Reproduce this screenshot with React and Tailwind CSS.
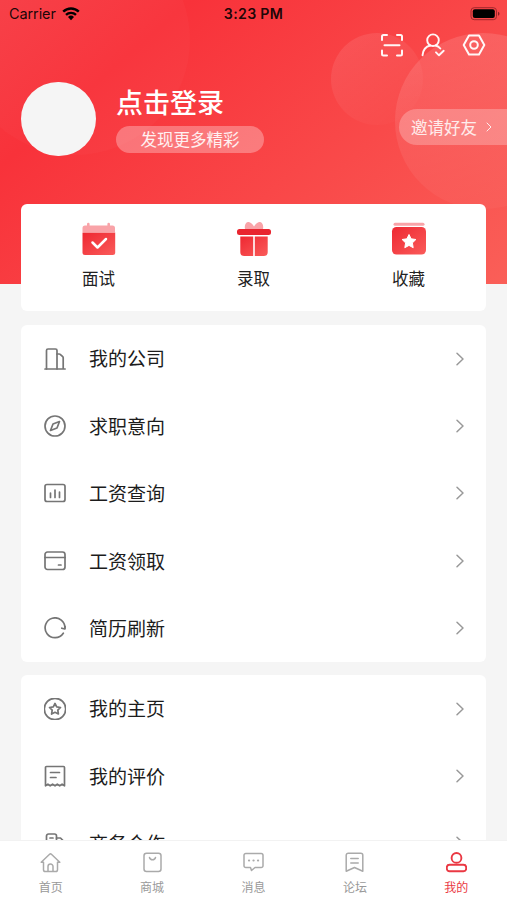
import clsx from 'clsx';

/* 线性图标的公共属性 */
const line = {
    fill: 'none',
    stroke: 'currentColor',
    strokeLinecap: 'round',
    strokeLinejoin: 'round',
};

/* 菜单图标 */
const MENU_ICONS = {
    company: (
        <>
            <path d="M2.500 21V2.500a1.500 1.500 0 0 1 1.500-1.500h7.500a1.500 1.500 0 0 1 1.500 1.500V21" />
            <path d="M13 6h2.200a1.500 1.500 0 0 1 1 .4l2.500 2.300a1.500 1.500 0 0 1 .5 1.100V21M1 21h20.200" />
        </>
    ),
    compass: (
        <>
            <circle cx="11" cy="11" r="10" />
            <path d="M15.500 6.500l-6.500 2.500-2.500 6.500 6.500-2.500z" />
        </>
    ),
    chart: (
        <>
            <rect x="1" y="2.500" width="20" height="17" rx="2" />
            <path d="M6.500 11v4.500M11 8v7.500M15.500 10v5.500" />
        </>
    ),
    wallet: (
        <>
            <rect x="1" y="2" width="20" height="17.500" rx="2.500" />
            <path d="M1 7.500h20M14.500 15h2.500" />
        </>
    ),
    refresh: (
        <>
            <path d="M19.300 16.200A9.900 9.900 0 1 1 20.900 11.500" />
            <path d="M17.800 11.200l3 .8.300-2.500" />
        </>
    ),
    star: (
        <>
            <circle cx="11" cy="11" r="10.700" />
            <path d="M11 5.500l1.700 3.400 3.800.6-2.700 2.700.6 3.800-3.400-1.700L7.600 16l.6-3.800-2.700-2.700 3.800-.6z" />
        </>
    ),
    review: (
        <>
            <path d="M1.500 20.800V2.500a1 1 0 0 1 1-1h17a1 1 0 0 1 1 1v18.300l-2.400-1.600-2.400 1.600-2.400-1.600-2.300 1.600-2.400-1.600-2.400 1.600-2.300-1.600z" />
            <path d="M6.500 7.500h9M6.500 12.500h5.500" />
        </>
    ),
    business: (
        <>
            <path d="M2.500 21V4a2 2 0 0 1 2-2h6a2 2 0 0 1 2 2V21" />
            <path d="M6 6h3M12.500 6h4l2.500 2.500V21M1 21h20" />
        </>
    ),
};

/* 第一组菜单 */
const JOB_MENUS = [
    { label: '我的公司', icon: 'company' },
    { label: '求职意向', icon: 'compass' },
    { label: '工资查询', icon: 'chart' },
    { label: '工资领取', icon: 'wallet' },
    { label: '简历刷新', icon: 'refresh' },
];

/* 第二组菜单 */
const PERSONAL_MENUS = [
    { label: '我的主页', icon: 'star' },
    { label: '我的评价', icon: 'review' },
    { label: '商务合作', icon: 'business' },
];

/* 快捷入口 */
const SHORTCUTS = [
    {
        label: '面试',
        icon: (
            <>
                <path d="M1.500 10V6A2.500 2.500 0 0 1 4 3.500h2V2a1.300 1.300 0 0 1 2.600 0v1.500h17.800V2A1.300 1.300 0 0 1 29 2v1.500h2.500A2.500 2.500 0 0 1 34 6v4z" fill="#f9a3a8" />
                <path d="M1.500 10.500H34.200v20a2.500 2.500 0 0 1-2.500 2.500H4a2.500 2.500 0 0 1-2.500-2.500z" fill="url(#red)" />
                <path d="M11.500 20.500l5 5 8.500-8.500" {...line} stroke="#fff" strokeWidth="2.500" />
            </>
        ),
    },
    {
        label: '录取',
        icon: (
            <>
                <path d="M9 7C8 2.500 10.500-.8 13.500.3c2 .7 3.500 2.500 4.500 4.200 1-1.700 2.500-3.500 4.500-4.200C25.500-.8 28 2.500 27 7z" fill="#f9a3a8" />
                <rect x="1" y="7" width="34" height="6" rx="2.500" fill="#e9252f" />
                <path d="M4.300 14.500h12.900V34H8a3.700 3.700 0 0 1-3.700-3.700zM18.800 14.500h12.900v15.800A3.700 3.700 0 0 1 28 34h-9.200z" fill="url(#red)" />
            </>
        ),
    },
    {
        label: '收藏',
        icon: (
            <>
                <rect x="2.500" y=".8" width="31" height="3" rx="1.500" fill="#f9a3a8" />
                <rect x="1" y="5" width="34" height="27.500" rx="4.500" fill="url(#red)" />
                <path d="M18 12.500l2.100 4.300 4.800.7-3.500 3.400.8 4.800-4.200-2.300-4.200 2.300.8-4.800-3.500-3.400 4.800-.7z" fill="#fff" stroke="#fff" strokeWidth="1" strokeLinejoin="round" />
            </>
        ),
    },
];

/* 底部导航 */
const TABS = [
    { label: '首页', icon: <path d="M1.200 10.200L9.600 2.300a1.300 1.300 0 0 1 1.800 0l8.400 7.900h-2.300v7.500a1.800 1.800 0 0 1-1.800 1.800H5.300a1.800 1.800 0 0 1-1.800-1.800v-7.500zM8 19.500v-5a2.500 2.500 0 0 1 5 0v5" /> },
    {
        label: '商城',
        icon: (
            <>
                <rect x="2" y="1.200" width="17" height="18.300" rx="2.500" />
                <path d="M7.500 5.500c.8 3 5.200 3 6 0" />
            </>
        ),
    },
    {
        label: '消息',
        icon: (
            <>
                <path d="M2.800 1.500h15.400A1.800 1.800 0 0 1 20 3.300v10.400a1.800 1.800 0 0 1-1.800 1.800H12l-3.500 3-1-3H2.800A1.800 1.800 0 0 1 1 13.700V3.300a1.800 1.800 0 0 1 1.800-1.800z" />
                <path d="M6 8.500h.1M10.500 8.500h.1M15 8.500h.1" strokeWidth="2.200" />
            </>
        ),
    },
    {
        label: '论坛',
        icon: (
            <>
                <path d="M2.200 19.300V3.200a2 2 0 0 1 2-2h12.600a2 2 0 0 1 2 2v16.100l-8.300-3.800z" />
                <path d="M6.800 6.500h7.400M6.800 11h7.400" />
            </>
        ),
    },
    {
        label: '我的',
        active: true,
        icon: (
            <>
                <circle cx="10.500" cy="5.900" r="4.900" />
                <rect x=".8" y="12.800" width="19.400" height="6.500" rx="2.800" />
            </>
        ),
    },
];

/* 状态栏 */
const StatusBar = () => (
    <div className="relative flex h-7 items-center justify-between pl-[9px] pr-[6px] font-['Inter',sans-serif] text-black/90">
        <div className="flex items-center gap-[6px]">
            <span className="text-[14.500px] tracking-[-0.1px]">Carrier</span>
            <svg className="h-[14px] w-[18px]" viewBox="0 0 18 14">
                <path d="M1.200 4.700a11.200 11.200 0 0 1 15.600 0M4 7.900a7.200 7.200 0 0 1 10 0" fill="none" stroke="#000" strokeWidth="2.400" />
                <path d="M9 13.200l-3-3.200a4.300 4.300 0 0 1 6 0z" />
            </svg>
        </div>
        <span className="absolute left-1/2 -translate-x-1/2 whitespace-nowrap text-[14.200px] font-semibold tracking-[0.300px]">3:23 PM</span>
        <svg className="h-[14px] w-[31px]" viewBox="0 0 31 14">
            <rect x="1" y=".7" width="25.500" height="12" rx="3.200" fill="none" stroke="#a0282d" />
            <rect x="2.800" y="2.300" width="22" height="8.800" rx="2" />
            <path d="M28 4.700v4c2-.8 2-3.200 0-4z" fill="#8a2024" />
        </svg>
    </div>
);

/* 菜单行 */
const MenuRow = ({ label, icon }) => (
    <div className="flex h-[67.400px] shrink-0 items-center pl-[23px] pr-[21px]">
        <svg className="h-[22px] w-[22px] text-[#757575]" viewBox="0 0 22 22" {...line} strokeWidth="1.700">
            {MENU_ICONS[icon]}
        </svg>
        <span className="ml-[23px] flex-1 text-[19px] text-[#1c1c1c]">{label}</span>
        <svg className="h-[14px] w-[10px] text-[#999]" viewBox="0 0 10 14" {...line} strokeWidth="1.500">
            <path d="M2 1.200L8 7l-6 5.800" />
        </svg>
    </div>
);

const App = () => {
    return (
        <div className="flex h-[900px] w-[507px] flex-col overflow-hidden bg-[#f5f5f5] font-['Noto_Sans_CJK_SC',sans-serif]">
            {/* 顶部用户信息 */}
            <header className="relative h-[284px] shrink-0 overflow-hidden bg-linear-[139deg] from-[#f73c44] via-[#f8323a] via-23% to-[#fa5f58]">
                <svg className="absolute inset-0 h-[284px] w-[507px]" viewBox="0 0 507 284">
                    <defs>
                        <linearGradient id="bubble" x1="0" y1="0" x2="0.700" y2="1">
                            <stop offset="0" stopColor="#fff" stopOpacity=".11" />
                            <stop offset="1" stopColor="#fff" stopOpacity=".01" />
                        </linearGradient>
                        <linearGradient id="bigBubble" x1="0.300" y1="0" x2="0.500" y2="1">
                            <stop offset="0" stopColor="#fff" stopOpacity=".13" />
                            <stop offset="1" stopColor="#fff" stopOpacity=".03" />
                        </linearGradient>
                    </defs>
                    <circle cx="75" cy="40" r="115" fill="#fff" fillOpacity=".025" />
                    <circle cx="377" cy="79" r="46" fill="url(#bubble)" />
                    <circle cx="483" cy="121" r="88" fill="url(#bigBubble)" />
                </svg>
                <StatusBar />
                {/* 右上角操作 */}
                <div className="relative flex h-[34px] items-center justify-end gap-[17px] pr-[21.500px] text-white/95">
                    <svg className="h-6 w-6" viewBox="0 0 24 24" {...line} strokeWidth="2">
                        <path d="M2 7V3.500A1.500 1.500 0 0 1 3.500 2H7M17 2h3.500A1.500 1.500 0 0 1 22 3.500V7M22 17.500V21a1.500 1.500 0 0 1-1.500 1.500H17M7 22.500H3.500A1.500 1.500 0 0 1 2 21v-3.500M4.500 12.300h15" />
                    </svg>
                    <svg className="h-6 w-6" viewBox="0 0 24 24" {...line} strokeWidth="1.900">
                        <circle cx="12" cy="7.200" r="5.800" />
                        <path d="M1.500 22.300c.5-5.300 3.300-8.800 7.800-9.800M14.700 12.500c1.800.5 3.400 1.500 4.600 3M15 19.300l3 3 4.700-4.500" />
                    </svg>
                    <svg className="h-6 w-6" viewBox="0 0 24 24" {...line} strokeWidth="2">
                        <path d="M7 2.500h10L22.300 12 17 21.500H7L1.700 12z" />
                        <circle cx="12" cy="12" r="3.800" />
                    </svg>
                </div>
                {/* 头像与登录 */}
                <div className="relative flex items-start pl-[21px] pt-5">
                    <div className="h-[74px] w-[75px] rounded-full bg-[#f5f5f5]" />
                    <div className="ml-5 mt-[2px]">
                        <p className="text-[27px] font-medium leading-9 text-white">点击登录</p>
                        <p className="mt-[6px] flex h-[27px] w-[148px] items-center justify-center rounded-full bg-white/30 text-[16.500px] text-white/90">发现更多精彩</p>
                    </div>
                    <div className="ml-auto mt-[27px] flex h-9 w-[108px] items-center rounded-l-full bg-white/25 pl-3 text-white/85">
                        <span className="text-[16.500px]">邀请好友</span>
                        <svg className="ml-[8px] h-[10px] w-[8px]" viewBox="0 0 8 10" {...line} strokeWidth="1">
                            <path d="M2 1l4 4-4 4" />
                        </svg>
                    </div>
                </div>
            </header>

            <main className="relative -mt-[81px] flex min-h-0 flex-1 flex-col overflow-hidden px-[21px] pt-px">
                {/* 快捷入口 */}
                <section className="grid h-[107px] shrink-0 grid-cols-3 rounded-[6px] bg-white">
                    {SHORTCUTS.map(item => (
                        <div key={item.label} className="flex flex-col items-center pt-[18px]">
                            <svg className="h-9 w-9" viewBox="0 0 36 36">
                                <defs>
                                    <linearGradient id="red" x1="0" y1="0" x2="1" y2="1">
                                        <stop offset="0" stopColor="#ee2832" />
                                        <stop offset="1" stopColor="#fa5b5a" />
                                    </linearGradient>
                                </defs>
                                {item.icon}
                            </svg>
                            <span className="mt-2 text-[16.500px] leading-6 text-[#222]">{item.label}</span>
                        </div>
                    ))}
                </section>

                <section className="mt-[14px] flex shrink-0 flex-col rounded-[6px] bg-white">
                    {JOB_MENUS.map(menu => <MenuRow key={menu.label} {...menu} />)}
                </section>

                <section className="mt-[13px] flex shrink-0 flex-col rounded-[6px] bg-white">
                    {PERSONAL_MENUS.map(menu => <MenuRow key={menu.label} {...menu} />)}
                </section>
            </main>

            {/* 底部导航 */}
            <nav className="grid h-[60px] shrink-0 grid-cols-5 border-t border-[#f2f2f2] bg-white">
                {TABS.map(tab => (
                    <div
                        key={tab.label}
                        className={clsx('flex flex-col items-center pt-[11px]', tab.active ? 'text-[#ea3843]' : 'text-[#aaa]')}
                    >
                        <svg className="h-[21px] w-[21px]" viewBox="0 0 21 21" {...line} strokeWidth={tab.active ? 1.9 : 1.5}>
                            {tab.icon}
                        </svg>
                        <span className={clsx('mt-[5px] text-[12px] leading-[18px]', !tab.active && 'text-[#999]')}>{tab.label}</span>
                    </div>
                ))}
            </nav>
        </div>
    );
};

export default App;
